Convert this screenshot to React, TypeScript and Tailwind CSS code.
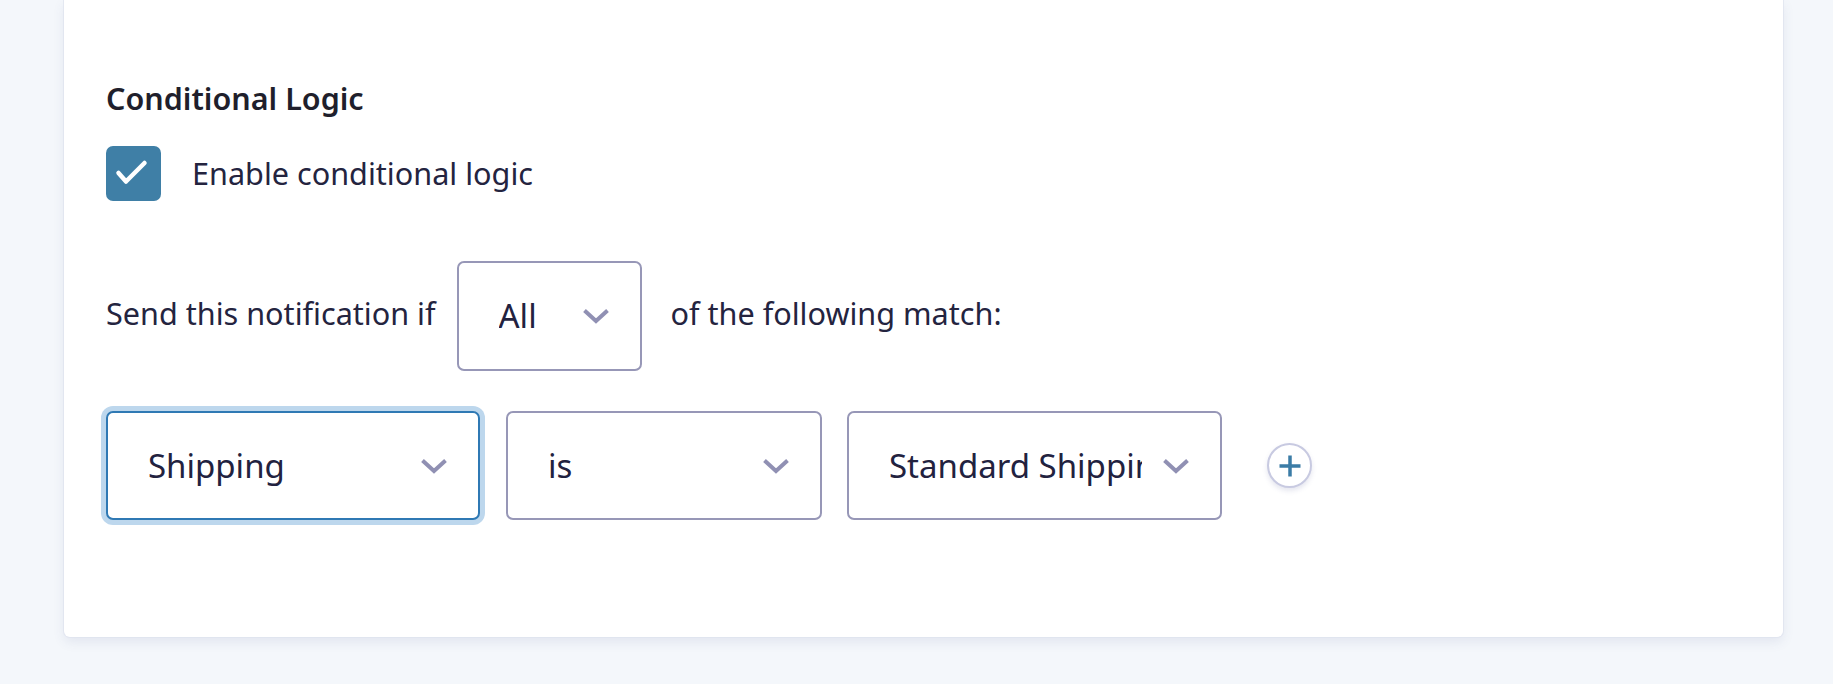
import React from "react";

function Chevron() {
  return (
    <svg width="28" height="16" viewBox="0 0 28 16" fill="none" className="shrink-0">
      <path d="M2.5 2.5 L14 13 L25.5 2.5" stroke="#9090b3" strokeWidth="4" strokeLinecap="butt" strokeLinejoin="miter" />
    </svg>
  );
}

function Select({
  value,
  width,
  height,
  focused = false,
  className = "",
}: {
  value: string;
  width: string;
  height: string;
  focused?: boolean;
  className?: string;
}) {
  return (
    <div
      className={
        "flex items-center rounded-[7px] border-2 bg-white pl-[40px] pr-[30px] " +
        width +
        " " +
        height +
        " " +
        (focused
          ? "border-[#2f79b4] shadow-[0_0_0_5px_#bdd7ed] "
          : "border-[#9797b7] ") +
        className
      }
    >
      <span className="mr-[20px] min-w-0 flex-1 overflow-hidden whitespace-nowrap text-[33px] leading-[1.5] text-[#22223f]">
        {value}
      </span>
      <Chevron />
    </div>
  );
}

export default function App() {
  return (
    <div className="min-h-[684px] bg-[#f4f7fb] pl-[64px] pr-[50px] font-['Noto_Sans',sans-serif]">
      <div className="rounded-b-[6px] bg-white pl-[42px] pt-[78px] pb-[117px] shadow-[0_0_0_1px_rgba(222,226,238,0.7),0_5px_12px_rgba(70,80,140,0.10)]">
        <h2 className="text-[30.5px] font-semibold leading-[40px] text-[#1f1f2c]">Conditional Logic</h2>

        <label className="mt-[28px] flex h-[55px] items-center">
          <span className="flex h-[55px] w-[55px] shrink-0 items-center justify-center rounded-[7px] bg-[#3f7fa6]">
            <svg width="55" height="55" viewBox="0 0 55 55" fill="none">
              <path d="M12.5 27 L20 35.5 L38.5 17" stroke="#ffffff" strokeWidth="4.5" strokeLinecap="round" strokeLinejoin="round" />
            </svg>
          </span>
          <span className="ml-[31px] text-[30.6px] leading-[1.4] text-[#24243f]">Enable conditional logic</span>
        </label>

        <div className="mt-[60px] flex h-[110px] items-center">
          <span className="mb-[6px] text-[30.6px] leading-[1.4] text-[#24243f]">Send this notification if</span>
          <Select value="All" width="w-[185px]" height="h-[110px]" className="ml-[21px]" />
          <span className="mb-[6px] ml-[29px] text-[30.6px] leading-[1.4] text-[#24243f]">of the following match:</span>
        </div>

        <div className="mt-[40px] flex items-center">
          <Select value="Shipping" width="w-[374px]" height="h-[109px]" focused />
          <Select value="is" width="w-[316px]" height="h-[109px]" className="ml-[26px]" />
          <Select value="Standard Shipping" width="w-[375px]" height="h-[109px]" className="ml-[25px]" />
          <button className="ml-[45px] flex h-[45px] w-[45px] items-center justify-center rounded-full border-2 border-[#c8cae1] bg-white shadow-[0_3px_5px_rgba(80,90,150,0.15)]">
            <svg width="24" height="24" viewBox="0 0 24 24" fill="none">
              <path d="M12 1.5 V22.5 M1.5 12 H22.5" stroke="#3b7ca6" strokeWidth="3.5" />
            </svg>
          </button>
        </div>
      </div>
    </div>
  );
}
